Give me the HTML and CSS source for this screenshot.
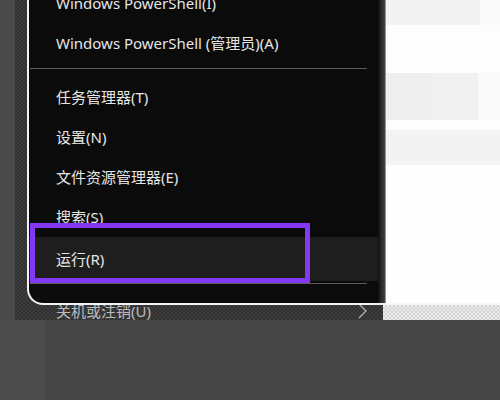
FILE: index.html
```html
<!DOCTYPE html>
<html lang="zh-CN">
<head>
    <meta charset="UTF-8">
    <meta name="viewport" content="width=device-width, initial-scale=1.0">
    <title>Win+X 菜单</title>
    <link rel="stylesheet" href="styles.css">
</head>
<body>
    <div class="photo">
        <div class="upper">
            <div class="gutter"></div>
            <div class="frame">
                <div class="screen">
                    <div class="menu">
                        <ul class="items">
                            <li class="item">Windows PowerShell(I)</li>
                            <li class="item">Windows PowerShell (管理员)(A)</li>
                            <li class="sep"></li>
                            <li class="item">任务管理器(T)</li>
                            <li class="item">设置(N)</li>
                            <li class="item">文件资源管理器(E)</li>
                            <li class="item">搜索(S)</li>
                            <li class="item item-active">运行(R)</li>
                            <li class="sep sep-low"></li>
                        </ul>
                        <!-- annotation box drawn over the run item -->
                        <div class="mark"></div>
                    </div>
                    <div class="seam"></div>
                    <div class="desk">
                        <div class="desk-row row-a"><span class="cell cell-a"></span></div>
                        <div class="desk-row row-b"></div>
                        <div class="desk-row row-c"><span class="cell cell-c1"></span><span class="cell cell-c2"></span></div>
                        <div class="desk-row row-d"></div>
                        <div class="desk-row row-e"></div>
                        <div class="desk-row row-f"></div>
                    </div>
                </div>
                <div class="strip">
                    <div class="strip-dark">
                        <span class="last">关机或注销(U)</span>
                        <svg class="chev" width="9" height="16" viewBox="0 0 9 16">
                            <polyline points="1,1 8,8 1,15" fill="none" stroke="#b8b8b8" stroke-width="1.3"/>
                        </svg>
                    </div>
                    <div class="strip-light"></div>
                </div>
            </div>
        </div>
        <div class="lower">
            <div class="lower-side"></div>
            <div class="lower-main"></div>
        </div>
    </div>
</body>
</html>
```

FILE: styles.css
```css
body {
    margin: 0;
    padding: 0;
    background: #474747;
    font-family: 'Noto Sans', 'Noto Sans CJK SC', sans-serif;
}
.photo {
    width: 500px;
    height: 400px;
    overflow: hidden;
}
.upper {
    display: flex;
    height: 320px;
}
.gutter {
    width: 15px;
    background: #4a4a4a;
}
.frame {
    flex: 1;
    display: flex;
    flex-direction: column;
    background: repeating-conic-gradient(#2f2f2f 0 25%, #3d3d3d 0 50%) 0 0 / 4px 4px;
}
.screen {
    display: flex;
    height: 305px;
    margin-left: 12px;
}
.menu {
    position: relative;
    width: 349px;
    height: 303px;
    background: #0b0b0b;
    border-left: 2px solid #f2f2f2;
    border-bottom: 2px solid #f2f2f2;
    border-bottom-left-radius: 16px;
    overflow: hidden;
}
.items {
    list-style: none;
    margin: -17px 0 0 0;
    padding: 0;
}
.item {
    height: 40px;
    line-height: 40px;
    padding-left: 27px;
    font-size: 15px;
    color: #e6e6e6;
    white-space: nowrap;
}
.item-active {
    height: 44px;
    line-height: 44px;
    background: #1e1e1e;
}
.sep {
    height: 1px;
    margin: 5px 11px 8px 1px;
    background: #5e5e5e;
}
.sep-low {
    margin-top: 2px;
}
.mark {
    position: absolute;
    left: 1px;
    top: 223px;
    width: 280px;
    height: 60px;
    box-sizing: border-box;
    border: 5px solid #8338f4;
}
.seam {
    width: 8px;
    height: 303px;
    background: linear-gradient(to right, #0d0d0d, #2c2c2c 45%, #3a3a3a 80%, #bdbdbd);
    border-bottom: 2px solid #f2f2f2;
}
.desk {
    flex: 1;
    display: flex;
    flex-direction: column;
    height: 303px;
    background: #fdfdfd;
    border-bottom: 2px solid #f6f6f6;
}
.desk-row {
    display: flex;
}
.row-a {
    height: 25px;
    background: #fafafa;
}
.cell-a {
    width: 94px;
    background: #f2f2f2;
}
.row-b {
    height: 48px;
}
.row-c {
    height: 47px;
    background: #fafafa;
}
.cell-c1 {
    width: 46px;
    background: #eeeeee;
}
.cell-c2 {
    width: 46px;
    background: #f1f1f1;
}
.row-d {
    height: 10px;
}
.row-e {
    height: 35px;
    background: #f3f3f3;
}
.row-f {
    flex: 1;
    background: #fefefe;
}
.strip {
    display: flex;
    height: 15px;
}
.strip-dark {
    display: flex;
    align-items: flex-start;
    width: 368px;
}
.strip-light {
    flex: 1;
    background: repeating-conic-gradient(#d2d2d2 0 25%, #ececec 0 50%) 0 0 / 4px 4px;
}
.last {
    height: 15px;
    line-height: 12px;
    padding-left: 41px;
    overflow: hidden;
    font-size: 15px;
    color: #bcbcbc;
    white-space: nowrap;
}
.chev {
    margin: -2px 16px 0 auto;
}
.lower {
    display: flex;
    height: 80px;
}
.lower-side {
    width: 45px;
    background: #4b4b4b;
}
.lower-main {
    flex: 1;
    background: #464646;
}
```
